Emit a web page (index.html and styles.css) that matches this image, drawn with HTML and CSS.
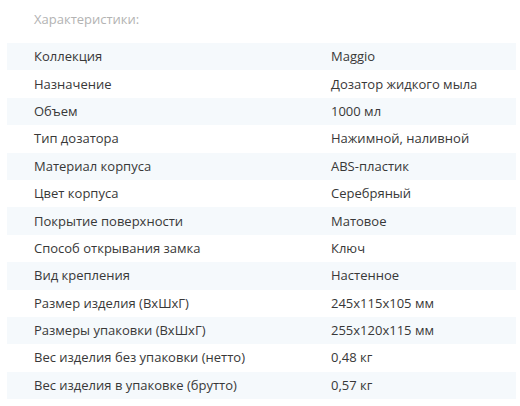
FILE: index.html
```html
<!DOCTYPE html>
<html lang="ru">
<head>
<meta charset="utf-8">
<link rel="stylesheet" href="styles.css">
</head>
<body>
<div class="specs">
  <div class="title">Характеристики:</div>
  <div class="table">
    <div class="row"><span>Коллекция</span><span>Maggio</span></div>
    <div class="row"><span>Назначение</span><span>Дозатор жидкого мыла</span></div>
    <div class="row"><span>Объем</span><span>1000 мл</span></div>
    <div class="row"><span>Тип дозатора</span><span>Нажимной, наливной</span></div>
    <div class="row"><span>Материал корпуса</span><span>ABS-пластик</span></div>
    <div class="row"><span>Цвет корпуса</span><span>Серебряный</span></div>
    <div class="row"><span>Покрытие поверхности</span><span>Матовое</span></div>
    <div class="row"><span>Способ открывания замка</span><span>Ключ</span></div>
    <div class="row"><span>Вид крепления</span><span>Настенное</span></div>
    <div class="row"><span>Размер изделия (ВхШхГ)</span><span>245x115x105 мм</span></div>
    <div class="row"><span>Размеры упаковки (ВхШхГ)</span><span>255x120x115 мм</span></div>
    <div class="row"><span>Вес изделия без упаковки (нетто)</span><span>0,48 кг</span></div>
    <div class="row"><span>Вес изделия в упаковке (брутто)</span><span>0,57 кг</span></div>
  </div>
</div>
</body>
</html>
```

FILE: styles.css
```css
html, body {
  margin: 0;
  padding: 0;
  background: #ffffff;
}
.specs {
  width: 509px;
  padding: 10px 0 0 7px;
  font-family: "Open Sans", "Liberation Sans", sans-serif;
  font-size: 13px;
  color: #383838;
}
.title {
  padding-left: 27px;
  height: 33px;
  line-height: 18px;
  color: #b3b3b3;
}
.row {
  display: grid;
  grid-template-columns: 297px 1fr;
  padding: 0 0 1px 27px;
  height: 26.4px;
  align-items: center;
}
.row:nth-child(odd) {
  background: #f5f9fc;
}
```
